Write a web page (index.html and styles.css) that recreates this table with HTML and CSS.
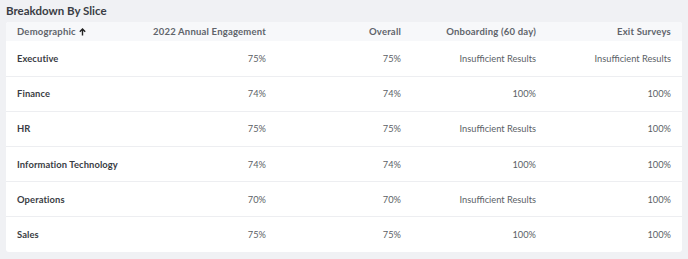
FILE: index.html
```html
<!DOCTYPE html>
<html>
<head>
<meta charset="utf-8">
<link rel="stylesheet" href="styles.css">
</head>
<body>
<div class="page">
  <h2 class="title">Breakdown By Slice</h2>
  <div class="card">
    <table class="grid">
      <colgroup>
        <col class="c-first"><col class="c-num"><col class="c-num"><col class="c-num"><col class="c-num">
      </colgroup>
      <thead>
        <tr>
          <th class="left">Demographic <svg class="arrow" width="7" height="8" viewBox="0 0 7 8"><path d="M3.5 7.5V1.2M0.8 3.8L3.5 1.1L6.2 3.8" fill="none" stroke="#222" stroke-width="1.4"/></svg></th>
          <th>2022 Annual Engagement</th>
          <th>Overall</th>
          <th>Onboarding (60 day)</th>
          <th>Exit Surveys</th>
        </tr>
      </thead>
      <tbody>
        <tr><td class="name">Executive</td><td>75%</td><td>75%</td><td>Insufficient Results</td><td>Insufficient Results</td></tr>
        <tr><td class="name">Finance</td><td>74%</td><td>74%</td><td>100%</td><td>100%</td></tr>
        <tr><td class="name">HR</td><td>75%</td><td>75%</td><td>Insufficient Results</td><td>100%</td></tr>
        <tr><td class="name">Information Technology</td><td>74%</td><td>74%</td><td>100%</td><td>100%</td></tr>
        <tr><td class="name">Operations</td><td>70%</td><td>70%</td><td>Insufficient Results</td><td>100%</td></tr>
        <tr><td class="name">Sales</td><td>75%</td><td>75%</td><td>100%</td><td>100%</td></tr>
      </tbody>
    </table>
  </div>
</div>
</body>
</html>
```
FILE: styles.css
```css
html, body {
  margin: 0;
  padding: 0;
  background: #f0f1f4;
}
.page {
  width: 688px;
  height: 259px;
  box-sizing: border-box;
  padding: 4px 6px 0 6px;
  font-family: Lato, "Liberation Sans", sans-serif;
}
.title {
  margin: 0 0 4px 0;
  font-size: 11.5px;
  font-weight: 700;
  color: #3a3d44;
  line-height: 14px;
}
.card {
  background: #ffffff;
  border-radius: 3px;
  width: 676px;
  overflow: hidden;
}
.grid {
  width: 100%;
  border-collapse: collapse;
  table-layout: fixed;
}
.c-first { width: 136px; }
.c-num { width: 135px; }
thead tr {
  background: #f7f8fa;
  height: 19px;
}
th {
  font-size: 9.5px;
  font-weight: 700;
  letter-spacing: 0.2px;
  color: #60646b;
  text-align: right;
  padding: 0 11px 0 0;
  white-space: nowrap;
}
th.left {
  text-align: left;
  padding-left: 11px;
}
.arrow {
  vertical-align: -1px;
  margin-left: 1px;
}
tbody tr {
  height: 35.2px;
  border-top: 1px solid #edeef1;
}
tbody tr:first-child { border-top: none; }
td {
  font-size: 9.25px;
  color: #5b5f66;
  text-align: right;
  padding: 0 11px 0 0;
  white-space: nowrap;
}
td.name {
  text-align: left;
  padding-left: 11px;
  font-weight: 700;
  font-size: 9.4px;
  letter-spacing: 0.1px;
  color: #3a3d44;
}
```
